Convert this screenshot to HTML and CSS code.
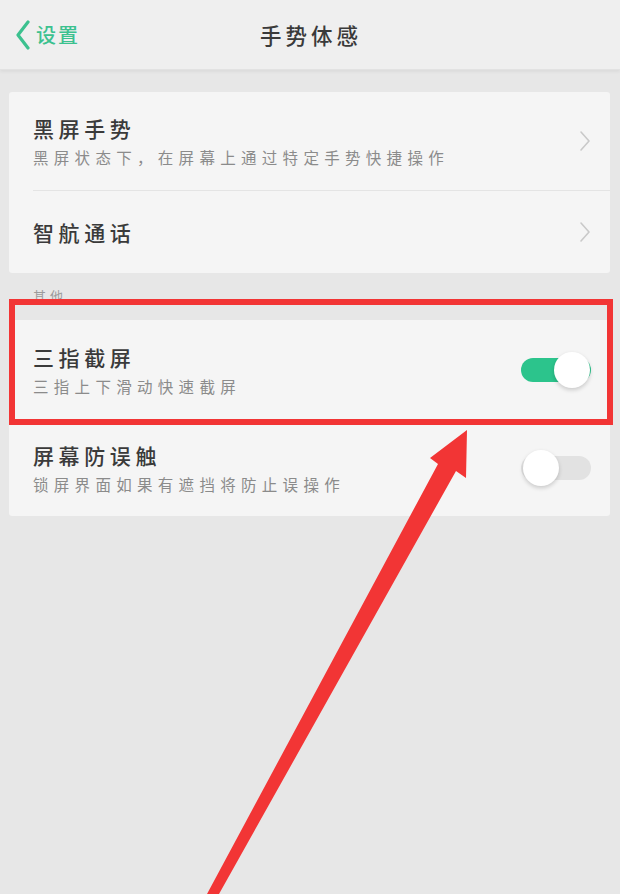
FILE: index.html
```html
<!DOCTYPE html>
<html lang="zh-CN">
<head>
<meta charset="utf-8">
<title>手势体感</title>
<link rel="stylesheet" href="styles.css">
</head>
<body>
<div class="screen">
  <header class="topbar">
    <div class="back">
      <svg class="back-icon" width="16" height="30" viewBox="0 0 16 30"><path d="M13 2 L3 15 L13 28" fill="none" stroke="#3cc18f" stroke-width="3.2" stroke-linecap="round" stroke-linejoin="round"/></svg>
      <span class="back-text">设置</span>
    </div>
    <h1 class="title">手势体感</h1>
  </header>

  <main class="content">
    <section class="card">
      <div class="row row-tall">
        <div class="texts">
          <div class="row-title">黑屏手势</div>
          <div class="row-sub">黑屏状态下，在屏幕上通过特定手势快捷操作</div>
        </div>
        <svg class="chev" width="12" height="22" viewBox="0 0 12 22"><path d="M2 2 L10 11 L2 20" fill="none" stroke="#c9c9c9" stroke-width="1.6" stroke-linecap="round" stroke-linejoin="round"/></svg>
      </div>
      <div class="divider"></div>
      <div class="row row-short">
        <div class="texts">
          <div class="row-title">智航通话</div>
        </div>
        <svg class="chev" width="12" height="22" viewBox="0 0 12 22"><path d="M2 2 L10 11 L2 20" fill="none" stroke="#c9c9c9" stroke-width="1.6" stroke-linecap="round" stroke-linejoin="round"/></svg>
      </div>
    </section>

    <div class="section-label">其他</div>

    <section class="card">
      <div class="row row-a">
        <div class="texts">
          <div class="row-title">三指截屏</div>
          <div class="row-sub">三指上下滑动快速截屏</div>
        </div>
        <div class="toggle on"><span class="knob"></span></div>
      </div>
      <div class="row row-b">
        <div class="texts">
          <div class="row-title">屏幕防误触</div>
          <div class="row-sub">锁屏界面如果有遮挡将防止误操作</div>
        </div>
        <div class="toggle off"><span class="knob"></span></div>
      </div>
    </section>
  </main>

  <div class="highlight-box"></div>
  <svg class="arrow" width="620" height="894" viewBox="0 0 620 894">
    <polygon points="467,430 466,478 456,471 219,894 207,894 438,464 430,458" fill="#f23535"/>
  </svg>
</div>
</body>
</html>
```

FILE: styles.css
```css
* { box-sizing: border-box; margin: 0; padding: 0; }

html, body {
  width: 620px;
  height: 894px;
  overflow: hidden;
}

body {
  background: #e7e7e7;
  font-family: "Noto Sans CJK SC", "Noto Sans", sans-serif;
  color: #3a3a3a;
}

.screen {
  position: relative;
  width: 620px;
  height: 894px;
}

.topbar {
  position: relative;
  height: 70px;
  background: #efefef;
  display: flex;
  align-items: center;
  justify-content: center;
  box-shadow: 0 2px 3px rgba(0,0,0,0.05);
  border-bottom: 1px solid #e2e2e2;
}

.back {
  position: absolute;
  left: 15px;
  top: 20px;
  display: flex;
  align-items: center;
  gap: 5px;
}

.back-text {
  font-size: 20px;
  font-weight: 500;
  letter-spacing: 2px;
  color: #3cc18f;
  line-height: 30px;
}

.title {
  font-size: 21.5px;
  font-weight: 500;
  letter-spacing: 4px;
  color: #3a3a3a;
  line-height: 30px;
  margin-left: 2px;
}

.content {
  padding: 22px 10px 0 9px;
}

.card {
  background: #f5f5f5;
  border-radius: 3px;
}

.row {
  display: flex;
  align-items: center;
  justify-content: space-between;
  padding: 0 19px 0 24px;
}

.row-tall { height: 98px; }
.row-short { height: 82px; }
.row-a { height: 100px; }
.row-b { height: 96px; }

.texts {
  display: flex;
  flex-direction: column;
  gap: 6px;
}

.row-title {
  font-size: 21px;
  font-weight: 500;
  letter-spacing: 4.6px;
  line-height: 26px;
  color: #3a3a3a;
}

.row-sub {
  font-size: 15.5px;
  letter-spacing: 5.3px;
  line-height: 20px;
  color: #8b8b8b;
}

.chev {
  display: block;
}

.divider {
  height: 1px;
  background: #e4e4e4;
  margin-left: 24px;
}

.section-label {
  font-size: 13px;
  line-height: 16px;
  color: #9c9c9c;
  letter-spacing: 4px;
  padding: 15px 0 0 24px;
  height: 47px;
}

.toggle {
  position: relative;
  width: 70px;
  height: 24px;
  border-radius: 12px;
}

.toggle.on { background: #2cc48c; }
.toggle.off { background: #e2e2e2; }

.knob {
  position: absolute;
  top: -6px;
  width: 36px;
  height: 36px;
  border-radius: 50%;
  background: #ffffff;
  box-shadow: 0 2px 4px rgba(0,0,0,0.18);
}

.toggle.on .knob { right: 1px; }
.toggle.off .knob { left: 2px; }

.highlight-box {
  position: absolute;
  left: 9px;
  top: 299px;
  width: 604px;
  height: 126px;
  border: 6px solid #f23535;
}

.arrow {
  position: absolute;
  left: 0;
  top: 0;
  pointer-events: none;
}
```
